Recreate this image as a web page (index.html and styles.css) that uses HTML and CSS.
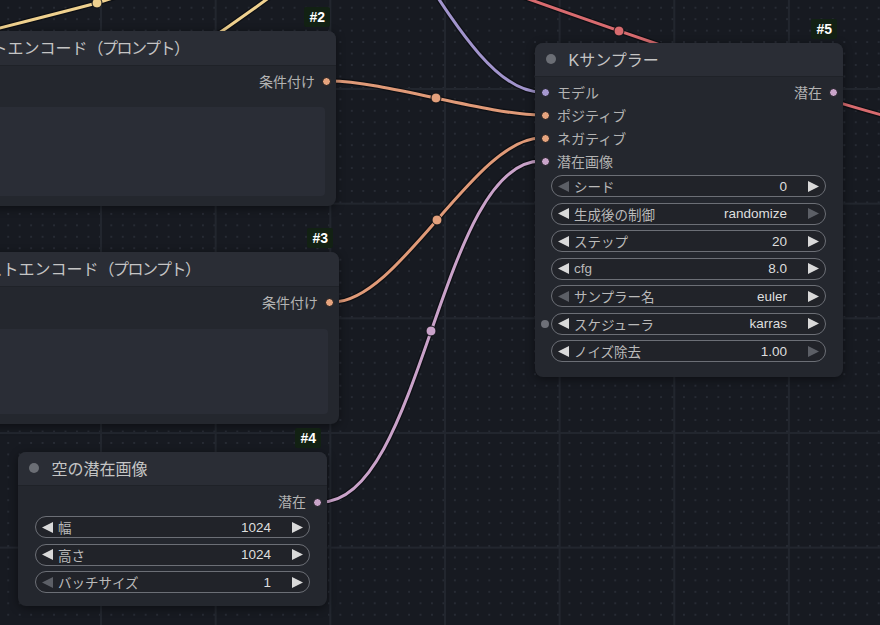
FILE: index.html
```html
<!DOCTYPE html>
<html lang="ja">
<head>
<meta charset="utf-8">
<title>ComfyUI</title>
<link rel="stylesheet" href="styles.css">
</head>
<body>
<div class="canvas">
  <svg class="links" width="880" height="625" viewBox="0 0 880 625">
    <g class="outline">
      <path d="M-40 38 Q40 18 97 3 L132 -8"/>
      <path d="M200 46 Q236 22 274 -6"/>
      <path d="M300 -150 C385 -150, 456 92, 541 92"/>
      <path d="M470 -22 C600 25, 780 88, 900 120"/>
      <path d="M330 81 C383 81, 488 115, 541 115"/>
      <path d="M333 302 C399 302, 475 138, 541 138"/>
      <path d="M321 502 C422 502, 440 161, 541 161"/>
    </g>
    <g class="color">
      <path class="l-clip" d="M-40 38 Q40 18 97 3 L132 -8"/>
      <path class="l-clip" d="M200 46 Q236 22 274 -6"/>
      <path class="l-model" d="M300 -150 C385 -150, 456 92, 541 92"/>
      <path class="l-vae" d="M470 -22 C600 25, 780 88, 900 120"/>
      <path class="l-cond" d="M330 81 C383 81, 488 115, 541 115"/>
      <path class="l-cond" d="M333 302 C399 302, 475 138, 541 138"/>
      <path class="l-lat" d="M321 502 C422 502, 440 161, 541 161"/>
    </g>
    <g class="mid">
      <circle class="m-clip" cx="97" cy="3" r="5"/>
      <circle class="m-vae" cx="619" cy="31" r="5"/>
      <circle class="m-cond" cx="436" cy="98" r="5"/>
      <circle class="m-cond" cx="437" cy="220" r="5"/>
      <circle class="m-lat" cx="431" cy="331" r="5"/>
    </g>
  </svg>

  <div class="node n2">
    <div class="badge">#2</div>
    <div class="head tall"><span class="hdot"></span><span class="title">CLIPテキストエンコード<span class="prop">（プロンプト）</span></span></div>
    <div class="body">
      <div class="slot"><span class="spacer"></span><span class="slbl out">条件付け</span><i class="dot cond"></i></div>
      <div class="ta ta2"></div>
    </div>
  </div>

  <div class="node n3">
    <div class="badge">#3</div>
    <div class="head tall"><span class="hdot"></span><span class="title">CLIPテキストエンコード<span class="prop">（プロンプト）</span></span></div>
    <div class="body">
      <div class="slot"><span class="spacer"></span><span class="slbl out">条件付け</span><i class="dot cond"></i></div>
      <div class="ta ta3"></div>
    </div>
  </div>

  <div class="node n4">
    <div class="badge">#4</div>
    <div class="head"><span class="hdot"></span><span class="title">空の潜在画像</span></div>
    <div class="body b4">
      <div class="slot"><span class="spacer"></span><span class="slbl out">潜在</span><i class="dot lat"></i></div>
      <div class="widgets w4">
        <div class="w"><svg class="arr" viewBox="0 0 11 11"><polygon points="11,0 11,11 0,5.5"/></svg><span class="lbl">幅</span><span class="val">1024</span><svg class="arr" viewBox="0 0 11 11"><polygon points="0,0 11,5.5 0,11"/></svg></div>
        <div class="w"><svg class="arr" viewBox="0 0 11 11"><polygon points="11,0 11,11 0,5.5"/></svg><span class="lbl">高さ</span><span class="val">1024</span><svg class="arr" viewBox="0 0 11 11"><polygon points="0,0 11,5.5 0,11"/></svg></div>
        <div class="w"><svg class="arr dim" viewBox="0 0 11 11"><polygon points="11,0 11,11 0,5.5"/></svg><span class="lbl">バッチサイズ</span><span class="val">1</span><svg class="arr" viewBox="0 0 11 11"><polygon points="0,0 11,5.5 0,11"/></svg></div>
      </div>
    </div>
  </div>

  <div class="node n5">
    <div class="badge">#5</div>
    <div class="head"><span class="hdot"></span><span class="title">Kサンプラー</span></div>
    <div class="body b5">
      <div class="slot"><i class="dot model"></i><span class="slbl in">モデル</span><span class="spacer"></span><span class="slbl out">潜在</span><i class="dot lat"></i></div>
      <div class="slot"><i class="dot cond"></i><span class="slbl in">ポジティブ</span></div>
      <div class="slot"><i class="dot cond"></i><span class="slbl in">ネガティブ</span></div>
      <div class="slot"><i class="dot lat"></i><span class="slbl in">潜在画像</span></div>
      <div class="widgets w5">
        <div class="w"><svg class="arr dim" viewBox="0 0 11 11"><polygon points="11,0 11,11 0,5.5"/></svg><span class="lbl">シード</span><span class="val">0</span><svg class="arr" viewBox="0 0 11 11"><polygon points="0,0 11,5.5 0,11"/></svg></div>
        <div class="w"><svg class="arr" viewBox="0 0 11 11"><polygon points="11,0 11,11 0,5.5"/></svg><span class="lbl">生成後の制御</span><span class="val">randomize</span><svg class="arr dim" viewBox="0 0 11 11"><polygon points="0,0 11,5.5 0,11"/></svg></div>
        <div class="w"><svg class="arr" viewBox="0 0 11 11"><polygon points="11,0 11,11 0,5.5"/></svg><span class="lbl">ステップ</span><span class="val">20</span><svg class="arr" viewBox="0 0 11 11"><polygon points="0,0 11,5.5 0,11"/></svg></div>
        <div class="w"><svg class="arr" viewBox="0 0 11 11"><polygon points="11,0 11,11 0,5.5"/></svg><span class="lbl">cfg</span><span class="val">8.0</span><svg class="arr" viewBox="0 0 11 11"><polygon points="0,0 11,5.5 0,11"/></svg></div>
        <div class="w"><svg class="arr dim" viewBox="0 0 11 11"><polygon points="11,0 11,11 0,5.5"/></svg><span class="lbl">サンプラー名</span><span class="val">euler</span><svg class="arr" viewBox="0 0 11 11"><polygon points="0,0 11,5.5 0,11"/></svg></div>
        <div class="w"><i class="wdot"></i><svg class="arr" viewBox="0 0 11 11"><polygon points="11,0 11,11 0,5.5"/></svg><span class="lbl">スケジューラ</span><span class="val">karras</span><svg class="arr" viewBox="0 0 11 11"><polygon points="0,0 11,5.5 0,11"/></svg></div>
        <div class="w"><svg class="arr" viewBox="0 0 11 11"><polygon points="11,0 11,11 0,5.5"/></svg><span class="lbl">ノイズ除去</span><span class="val">1.00</span><svg class="arr dim" viewBox="0 0 11 11"><polygon points="0,0 11,5.5 0,11"/></svg></div>
      </div>
    </div>
  </div>
</div>
</body>
</html>
```
FILE: styles.css
```css
html, body {
  margin: 0;
  padding: 0;
}
body {
  width: 880px;
  height: 625px;
  overflow: hidden;
  background: #171a21;
  font-family: "Liberation Sans", "Noto Sans CJK JP", sans-serif;
}
.canvas {
  position: relative;
  width: 880px;
  height: 625px;
  overflow: hidden;
  background-color: #171a21;
  background-image:
    linear-gradient(to right, #22262e 0, #22262e 1.5px, transparent 1.5px),
    linear-gradient(to bottom, #22262e 0, #22262e 1.5px, transparent 1.5px),
    radial-gradient(circle at center, #272b34 0, #272b34 0.9px, transparent 1.2px);
  background-size: 114.67px 114.67px, 114.67px 114.67px, 11.467px 11.467px;
  background-position: -14.67px 0, 0 -26.67px, 2.5px 2px;
}
.links {
  position: absolute;
  left: 0;
  top: 0;
}
.links path {
  fill: none;
  stroke-linecap: round;
}
.outline path {
  stroke: #0b0c10;
  stroke-width: 5.5;
  opacity: 0.75;
}
.color path {
  stroke-width: 3;
}
.l-clip { stroke: #efd18f; }
.l-model { stroke: #a194cc; }
.l-vae { stroke: #d86b6f; }
.l-cond { stroke: #e09a78; }
.l-lat { stroke: #c9a2c9; }
.mid circle {
  stroke: #101216;
  stroke-width: 1;
}
.m-clip { fill: #efd18f; }
.m-vae { fill: #d86b6f; }
.m-cond { fill: #e3a07c; }
.m-lat { fill: #c9a2c9; }

.node {
  position: absolute;
  display: flex;
  flex-direction: column;
  background: #24272e;
  border-radius: 8px;
  box-shadow: 0 2px 10px rgba(0, 0, 0, 0.45);
}
.n2 { left: -125px; top: 31px; width: 461px; height: 175px; }
.n3 { left: -114px; top: 252px; width: 453px; height: 172px; }
.n4 { left: 18px; top: 452px; width: 309px; height: 154px; }
.n5 { left: 535px; top: 43px; width: 308px; height: 334px; }

.badge {
  position: absolute;
  right: 6px;
  bottom: calc(100% + 4px);
  height: 20px;
  line-height: 20px;
  padding: 0 5px;
  background: #122113;
  color: #ffffff;
  font-size: 14px;
  font-weight: bold;
  border-radius: 2px;
}
.head {
  height: 34px;
  flex: none;
  box-sizing: border-box;
  display: flex;
  align-items: center;
  padding-left: 10.5px;
  padding-bottom: 2px;
  background: #2a2d35;
  border-radius: 8px 8px 0 0;
  border-bottom: 1px solid #1f2228;
}
.head.tall { height: 35px; }
.hdot {
  width: 10px;
  height: 10px;
  flex: none;
  border-radius: 50%;
  background: #6b6e75;
  margin-right: 13px;
}
.title {
  font-size: 16px;
  color: #c5c5c5;
  white-space: nowrap;
}
.prop {
  letter-spacing: -1.5px;
}
.body {
  display: flex;
  flex-direction: column;
  padding-top: 4px;
}
.b4 { padding-top: 4.5px; }
.slot {
  height: 23px;
  display: flex;
  align-items: center;
  padding: 0 5.5px;
}
.spacer { flex: 1; }
.slbl {
  font-size: 14px;
  color: #b3b3b3;
  white-space: nowrap;
  padding-bottom: 2px;
}
.slbl.in { margin-left: 7.5px; }
.slbl.out { margin-right: 6.5px; }
.dot {
  width: 9px;
  height: 9px;
  flex: none;
  border-radius: 50%;
  box-sizing: border-box;
  border: 1px solid #15171b;
}
.dot.cond { background: #e6a47e; }
.dot.lat { background: #c9a4c9; }
.dot.model { background: #a597cf; }

.ta {
  background: #2a2d36;
  border-radius: 4px;
  margin-left: 10px;
  margin-right: 11px;
}
.ta2 { margin-top: 14px; height: 89px; }
.ta3 { margin-top: 15px; height: 85px; }

.widgets {
  display: flex;
  flex-direction: column;
  gap: 5.5px;
}
.w4 { margin: 2.5px 17px 0 17px; }
.w5 { margin: 2px 17px 0 16px; }
.w {
  position: relative;
  height: 22px;
  box-sizing: border-box;
  border: 1px solid #6c6f76;
  border-radius: 11px;
  background: #212329;
  display: flex;
  align-items: center;
  padding: 0 6px;
  font-size: 13.5px;
}
.arr {
  width: 11px;
  height: 11px;
  flex: none;
  fill: #d9d9d9;
}
.arr.dim { fill: #5c5f66; }
.lbl {
  flex: 1;
  margin-left: 5px;
  color: #bababa;
  white-space: nowrap;
}
.val {
  color: #dedede;
  margin-right: 21px;
  white-space: nowrap;
}
.wdot {
  position: absolute;
  left: -11px;
  top: 6px;
  width: 8px;
  height: 8px;
  border-radius: 50%;
  background: #6e7078;
}
```
